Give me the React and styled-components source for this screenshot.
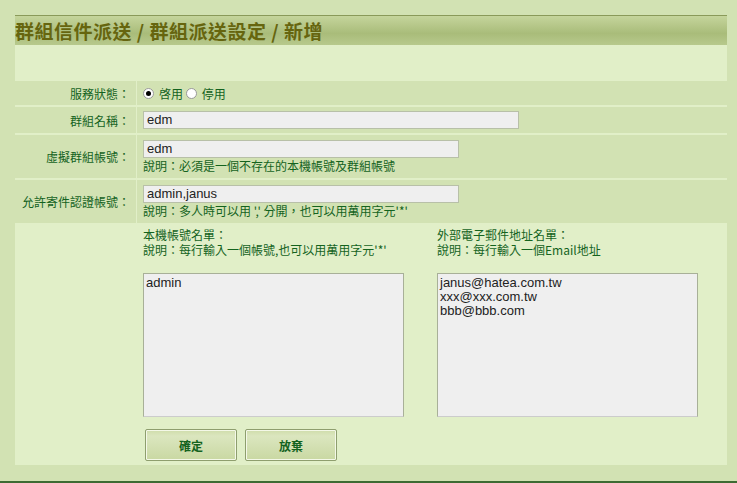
import React from "react";
import styled, { createGlobalStyle } from "styled-components";

const G = createGlobalStyle`
  html,body{margin:0;padding:0;background:#d2e2b3;width:737px;height:483px;overflow:hidden;}
  *{box-sizing:border-box;}
  body{font-family:"Noto Sans CJK TC","Liberation Sans",sans-serif;font-size:12px;color:#14631e;}
`;
const Page = styled.div`
  width:737px;height:483px;padding:15px 10px 0 15px;border-bottom:2px solid #3d6b33;
  display:flex;flex-direction:column;
`;
const Header = styled.div`
  height:30px;border-top:1px solid #8a9a5a;
  background:linear-gradient(#c5d59c,#a9bc7a 60%,#b7c98c);
  font-size:19px;font-weight:bold;color:#66650e;line-height:30px;
  font-family:"Noto Sans CJK TC",sans-serif;letter-spacing:0.5px;
`;
const Panel = styled.div`
  background:#e1efc8;padding-top:36px;height:420px;display:flex;flex-direction:column;
`;
const Row = styled.div`
  display:grid;grid-template-columns:122px 1fr;background:#d2e2b3;
  border-bottom:2px solid #e1efc8;min-height:${p=>p.h}px;
`;
const Label = styled.div`
  text-align:right;padding-right:6px;border-right:1px solid #e1efc8;
  display:flex;align-items:center;justify-content:flex-end;
`;
const Val = styled.div`
  padding:3px 6px;display:flex;flex-direction:${p=>p.row?"row":"column"};
  justify-content:${p=>p.row?"flex-start":"center"};align-items:${p=>p.row?"center":"stretch"};
`;
const Radio = styled.span`
  display:inline-block;width:11px;height:11px;border-radius:50%;background:#fff;
  border:1px solid #999;margin:0 5px 0 0;position:relative;
  ${p=>p.on&&`&::after{content:"";position:absolute;left:2px;top:2px;width:5px;height:5px;border-radius:50%;background:#000;}`}
`;
const Input = styled.div`
  width:${p=>p.w}px;height:18px;background:#efefef;border:1px solid #b8c0a8;
  font-family:"Liberation Sans",sans-serif;font-size:13px;color:#222;padding-left:3px;line-height:16px;
`;
const Note = styled.div`line-height:15px;`;
const Lists = styled.div`
  display:flex;gap:33px;padding:2px 0 0 128px;
`;
const Col = styled.div`display:flex;flex-direction:column;width:261px;`;
const Line = styled.div`line-height:15px;height:15px;white-space:nowrap;`;
const Area = styled.div`
  margin-top:16px;height:144px;background:#efefef;border:1px solid #a8b098;border-bottom-color:#ccc;
  font-family:"Liberation Sans",sans-serif;font-size:13px;color:#222;padding:2px 2px;line-height:14px;white-space:pre;
`;
const Buttons = styled.div`display:flex;gap:8px;padding:12px 0 0 130px;`;
const Btn = styled.div`
  width:92px;height:32px;border:1px solid #8e9e6e;box-shadow:inset 0 0 0 1px #f4f8e8;
  background:linear-gradient(#cfdcaa,#dbe6bf 20%,#c9d8a2);border-radius:2px;
  display:flex;align-items:center;justify-content:center;font-weight:bold;color:#14631e;
`;

export default function App(){
  return (<Page><G/>
    <Header>群組信件派送 / 群組派送設定 / 新增</Header>
    <Panel>
      <Row h={26}><Label>服務狀態：</Label><Val row><Radio on/>啓用&nbsp;<Radio/>停用</Val></Row>
      <Row h={28}><Label>群組名稱：</Label><Val><Input w={376}>edm</Input></Val></Row>
      <Row h={45}><Label>虛擬群組帳號：</Label><Val><Input w={316}>edm</Input><Note>說明：必須是一個不存在的本機帳號及群組帳號</Note></Val></Row>
      <Row h={45}><Label>允許寄件認證帳號：</Label><Val><Input w={316}>admin,janus</Input><Note>說明：多人時可以用 ',' 分開，也可以用萬用字元'*'</Note></Val></Row>
      <Lists>
        <Col><Line>本機帳號名單：</Line><Line>說明：每行輸入一個帳號,也可以用萬用字元'*'</Line><Area>admin</Area></Col>
        <Col><Line>外部電子郵件地址名單：</Line><Line>說明：每行輸入一個Email地址</Line><Area>{"janus@hatea.com.tw\nxxx@xxx.com.tw\nbbb@bbb.com"}</Area></Col>
      </Lists>
      <Buttons><Btn>確定</Btn><Btn>放棄</Btn></Buttons>
    </Panel>
  </Page>);
}
